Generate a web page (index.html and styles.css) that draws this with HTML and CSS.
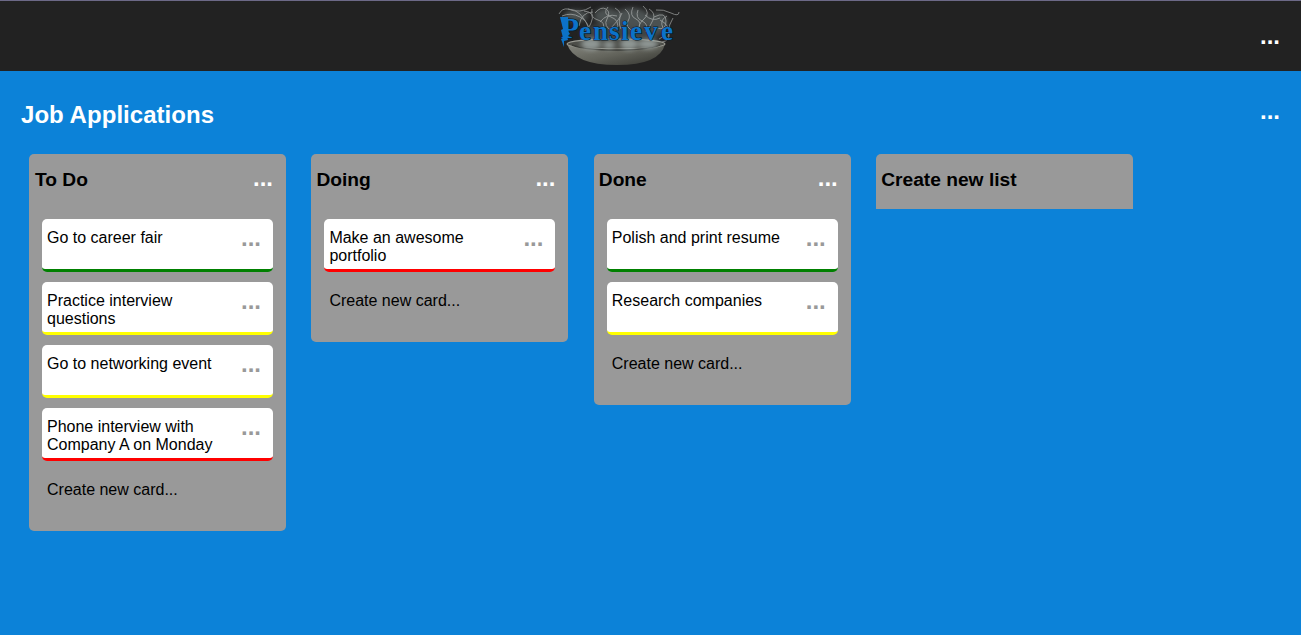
FILE: index.html
```html
<!DOCTYPE html>
<html lang="en">
<head>
<meta charset="utf-8">
<title>Pensieve</title>
<link rel="stylesheet" href="styles.css">
</head>
<body>
<header class="topbar">
  <svg class="logo" width="128" height="64" viewBox="0 0 128 64" role="img" aria-label="Pensieve">
    <defs>
      <linearGradient id="bowl" x1="0" y1="0" x2="1" y2="1">
        <stop offset="0" stop-color="#85867e"/>
        <stop offset=".5" stop-color="#62635b"/>
        <stop offset="1" stop-color="#33342f"/>
      </linearGradient>
      <filter id="soft" x="-20%" y="-30%" width="140%" height="160%"><feGaussianBlur stdDeviation="2.5"/></filter>
      <filter id="wisp" x="-10%" y="-10%" width="120%" height="120%"><feGaussianBlur stdDeviation=".6"/></filter>
    </defs>
    <g fill="#758080" filter="url(#soft)" opacity=".5">
      <ellipse cx="21" cy="13" rx="12" ry="6"/>
      <ellipse cx="52" cy="13" rx="13" ry="8"/>
      <ellipse cx="77" cy="15" rx="18" ry="10"/>
      <ellipse cx="103" cy="20" rx="10" ry="10"/>
      <ellipse cx="66" cy="30" rx="40" ry="11" opacity=".7"/>
    </g>
    <g fill="none" stroke="#c8cccb" stroke-width=".9" filter="url(#wisp)" opacity=".6">
      <path d="M4 11q3-6 9-5q7 0 12 5t9 14M7 13q9-4 18 1t8 12M13 6q12 5 23-2M29 8q12 1 7 12q-3 8-10 8M24 23q2-14 14-14"/>
      <path d="M37 6q-2 9 6 11t5 11M40 10q6-7 11-4t1 10t5 12M53 4q-6 7 3 10t6 13M60 5q9 5 3 12t-8 9M45 19q7-9 17-6M67 10q-5 8-1 16"/>
      <path d="M70 6q7 6 3 12t7 11M78 4q-4 9 3 12t1 12M83 7q-3 8 4 11t4 11M88 3q8 7 1 13t-4 11M94 6q7 4 4 11t-7 11M90 12q7 7 15 3M101 7q7-1 15 3t8-1M99 14q12-6 12 4t-9 7M112 13q-8 4-4 12t-4 11M118 15q-5 7-4 15t-7 9M105 17q12 6 8 17"/>
    </g>
    <path d="M12 41q7 21 50 21t48-21z" fill="url(#bowl)"/>
    <ellipse cx="61" cy="41" rx="49" ry="5" fill="#4c4d48" stroke="#999a92" stroke-width="1.200"/>
    <path d="M17 42q13 5 44 5t44-5" fill="none" stroke="#393a36" stroke-width="1.500"/>
    <g fill="#a6b0af" filter="url(#soft)" opacity=".75">
      <ellipse cx="36" cy="41" rx="10" ry="6"/>
      <ellipse cx="54" cy="42" rx="6" ry="4"/>
      <ellipse cx="74" cy="41" rx="9" ry="6"/>
      <ellipse cx="93" cy="41" rx="10" ry="5"/>
    </g>
    <g class="wordmark">
      <text x="6" y="35" font-size="30" textLength="18" lengthAdjust="spacingAndGlyphs">P</text>
      <text x="24 38 54 66 75 89 106" y="37" font-size="27">ensieve</text>
      <path class="bolt" d="M5 14h8v14l2 3-3 2 1 4-4 1 0 6-3-8 2-1-2-8 2-1z"/>
    </g>
  </svg>
  <button class="dots">...</button>
</header>
<main>
  <div class="board-head">
    <h1>Job Applications</h1>
    <button class="dots">...</button>
  </div>
  <div class="board">
    <section class="list">
      <div class="list-head"><h2>To Do</h2><button class="dots">...</button></div>
      <div class="cards">
        <article class="card green"><p>Go to career fair</p><button class="dots">...</button></article>
        <article class="card yellow"><p>Practice interview questions</p><button class="dots">...</button></article>
        <article class="card yellow"><p>Go to networking event</p><button class="dots">...</button></article>
        <article class="card red"><p>Phone interview with Company A on Monday</p><button class="dots">...</button></article>
        <div class="new-card">Create new card...</div>
      </div>
    </section>
    <section class="list">
      <div class="list-head"><h2>Doing</h2><button class="dots">...</button></div>
      <div class="cards">
        <article class="card red"><p>Make an awesome portfolio</p><button class="dots">...</button></article>
        <div class="new-card">Create new card...</div>
      </div>
    </section>
    <section class="list">
      <div class="list-head"><h2>Done</h2><button class="dots">...</button></div>
      <div class="cards">
        <article class="card green"><p>Polish and print resume</p><button class="dots">...</button></article>
        <article class="card yellow"><p>Research companies</p><button class="dots">...</button></article>
        <div class="new-card">Create new card...</div>
      </div>
    </section>
    <section class="list new-list"><h2>Create new list</h2></section>
  </div>
</main>
</body>
</html>
```
FILE: styles.css
```css
* { box-sizing: border-box; }
body {
  margin: 0;
  min-height: 635px;
  background: #0c82d8;
  font: 16px/18px "Liberation Sans", Arial, sans-serif;
  color: #000;
}
h1, h2, p { margin: 0; }
.dots {
  border: 0;
  padding: 0;
  background: none;
  font: bold 24px/28px "Liberation Sans", Arial, sans-serif;
  color: #fff;
}
.topbar {
  display: grid;
  grid-template-columns: 537px 128px 1fr;
  height: 71px;
  padding: 2px 21px 0 18px;
  border-top: 1px solid #6c6987;
  background: #222;
}
.logo { grid-column: 2; }
.topbar .dots { justify-self: end; align-self: start; margin-top: 19px; }
.wordmark {
  font-family: "Liberation Serif", serif;
  font-weight: bold;
  fill: #0c72c8;
  stroke: #071a2c;
  stroke-width: 1.2px;
  paint-order: stroke;
}
.bolt { stroke: none; }
.board-head {
  display: flex;
  justify-content: space-between;
  padding: 30px 21px 0;
  height: 83px;
}
h1 { color: #fff; font-size: 24px; line-height: 28px; letter-spacing: .04px; }
.board-head .dots { height: 28px; margin-top: -4px; }
.board { display: flex; align-items: flex-start; gap: 25.400px; padding-left: 29px; }
.list { width: 257px; border-radius: 5px; background: #999; }
.list-head { display: flex; justify-content: space-between; height: 65px; padding: 15px 13px 0 6px; }
h2 { font-size: 19.200px; line-height: 22px; }
.list:nth-child(n+2) h2 { margin-left: -1px; }
.list-head .dots { height: 28px; margin-top: -5px; }
.cards { display: flex; flex-direction: column; gap: 10px; padding: 0 13px 7px; }
.card {
  display: flex;
  justify-content: space-between;
  height: 53px;
  padding: 10px 12px 0 5px;
  border-bottom: 3px solid;
  border-radius: 5px;
  background: #fff;
}
.card p { width: 175px; }
.card .dots { height: 28px; margin-top: -5px; color: #999; }
.green { border-color: #008000; }
.yellow { border-color: #ff0; }
.red { border-color: #f00; }
.new-card { height: 53px; padding: 10px 5px 8px; }
.new-list { height: 55px; padding: 15px 6px; border-radius: 5px 5px 0 0; }
```
